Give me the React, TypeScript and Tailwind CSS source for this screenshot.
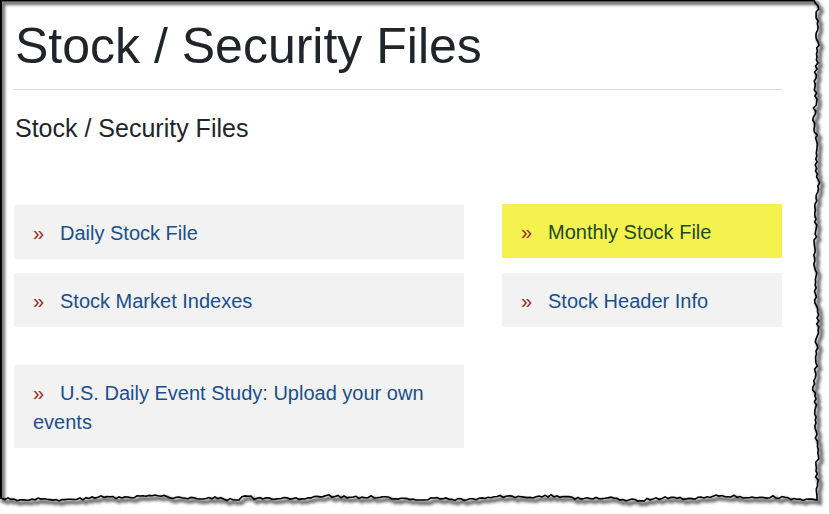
import React from "react";

function rand(seed: number) {
  let s = seed;
  return () => {
    s = (s * 16807) % 2147483647;
    return (s - 1) / 2147483646;
  };
}

function tornPath() {
  const r = rand(12345);
  const pts: [number, number][] = [];
  pts.push([0, 0]);
  pts.push([814, 0]);
  for (let y = 3; y <= 496; y += 3) {
    const x = 816 + Math.sin(y / 23) * 1.5 + Math.sin(y / 7) * 0.8 + (r() - 0.5) * 3;
    pts.push([x, y]);
  }
  pts.push([817, 500]);
  for (let x = 812; x >= 0; x -= 3) {
    let y = 498 + Math.sin(x / 31) * 1.5 + Math.sin(x / 9) * 0.8 + (r() - 0.5) * 2.5;
    if (x > 240 && x < 252) y -= 4;
    pts.push([x, y]);
  }
  pts.push([0, 498]);
  return "M" + pts.map(([x, y]) => `${x.toFixed(1)},${y.toFixed(1)}`).join(" L") + " Z";
}

function LinkBox({
  text,
  highlight,
  className = "",
}: {
  text: string;
  highlight?: boolean;
  className?: string;
}) {
  return (
    <div
      className={`pl-[19px] pr-4 pt-[14px] pb-[11px] text-[20px] leading-[29px] ${
        highlight ? "bg-[#f5f250] text-[#1c4a24]" : "bg-[#f2f2f2] text-[#1a4f8b]"
      } ${className}`}
    >
      <span className="inline-block w-[27px] text-[#9b2424]">»</span>
      {text}
    </div>
  );
}

export default function App() {
  const d = tornPath();
  return (
    <div
      className="relative w-[829px] h-[514px] bg-white overflow-hidden"
      style={{ fontFamily: '"Liberation Sans", Arial, sans-serif' }}
    >
      <div className="w-[782px] pl-[14px]">
        <h1 className="mt-[16px] pl-[1px] text-[50px] leading-[60px] text-[#212529]">
          Stock / Security Files
        </h1>
        <div className="mt-[13px] h-px bg-[#dedede]" />
        <h2 className="mt-[23px] pl-[1px] text-[25px] leading-[30px] text-[#212529]">
          Stock / Security Files
        </h2>
        <div className="mt-[62px] grid grid-cols-[450px_280px] gap-x-[38px]">
          <div className="flex flex-col">
            <LinkBox text="Daily Stock File" />
            <LinkBox text="Stock Market Indexes" className="mt-[14px]" />
            <LinkBox
              text="U.S. Daily Event Study: Upload your own events"
              className="mt-[38px] pr-[20px]"
            />
          </div>
          <div className="flex flex-col">
            <LinkBox text="Monthly Stock File" highlight className="-mt-px" />
            <LinkBox text="Stock Header Info" className="mt-[15px]" />
          </div>
        </div>
      </div>
      <svg
        className="absolute inset-0 pointer-events-none"
        width="829"
        height="514"
        viewBox="0 0 829 514"
      >
        <defs>
          <filter id="blur" x="-5%" y="-5%" width="110%" height="110%">
            <feGaussianBlur stdDeviation="1.6" />
          </filter>
        </defs>
        <path d={d} fill="none" stroke="#6b6b6b" strokeWidth="4" transform="translate(3,3)" filter="url(#blur)" />
        <path d={d} fill="none" stroke="#000" strokeWidth="1.6" />
        <rect x="0" y="0" width="2" height="498" fill="#000" />
        <rect x="0" y="0" width="815" height="1.5" fill="#000" />
      </svg>
    </div>
  );
}
